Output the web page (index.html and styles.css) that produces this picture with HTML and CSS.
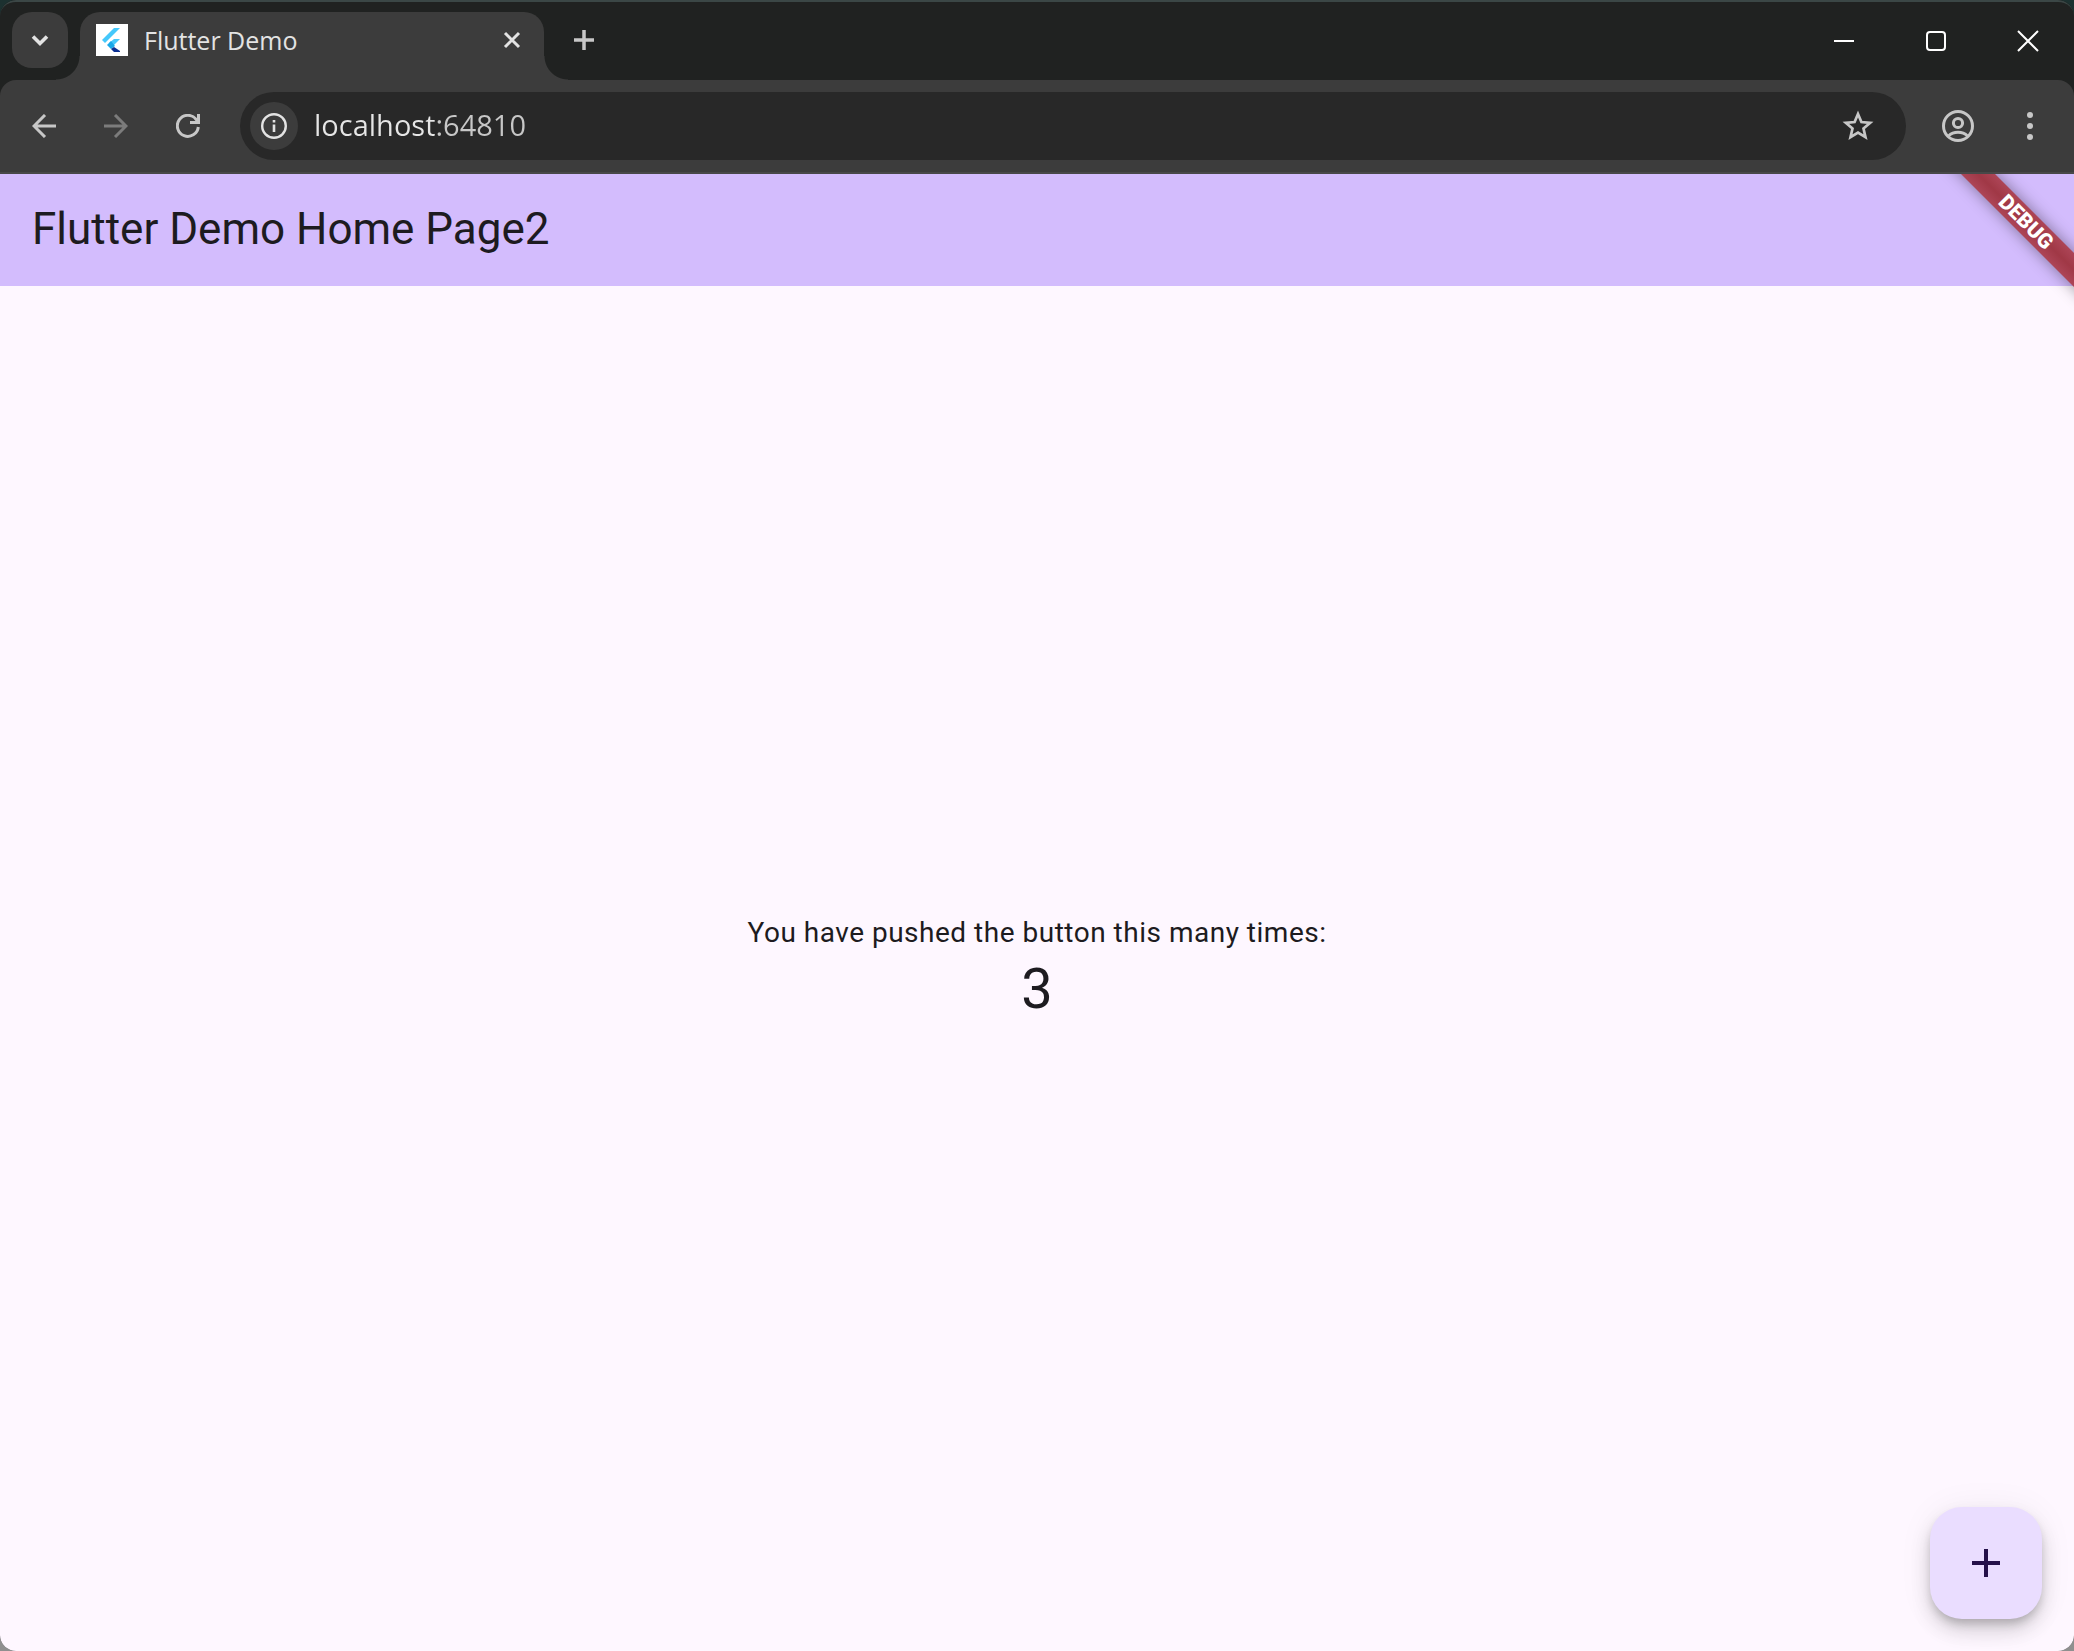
FILE: index.html
```html
<!DOCTYPE html>
<html lang="en">
<head>
<meta charset="utf-8">
<title>Flutter Demo</title>
<link rel="stylesheet" href="styles.css">
</head>
<body>
<div class="window">
  <header class="tabstrip">
    <button class="tab-search" aria-label="Search tabs"><svg width="24" height="24" viewBox="0 0 24 24"><path d="M5 8.500l7 7 7-7" fill="none" stroke="currentColor" stroke-width="3.600"/></svg></button>
    <div class="tab">
      <svg class="favicon" width="32" height="32" viewBox="0 0 32 32"><path fill="#fff" d="M0 0h32v32H0z"/><path fill="#45c8fb" d="M18 4h6L9 19l-3-3z"/><path fill="#45c8fb" d="M18 15h6l-7 7-4-3z"/><path fill="#19a8e8" d="M11 21l4-4 4 5-4 3z"/><path fill="#0b2f93" d="M15 25l3-2 6 4v1h-6z"/></svg>
      <span class="tab-title">Flutter Demo</span>
      <button class="tab-close" aria-label="Close tab"><svg width="24" height="24" viewBox="0 0 24 24"><path d="M5 5l14 14M19 5L5 19" fill="none" stroke="currentColor" stroke-width="3"/></svg></button>
    </div>
    <button class="new-tab" aria-label="New tab"><svg width="24" height="24" viewBox="0 0 24 24"><path d="M2 12h20M12 2v20" fill="none" stroke="currentColor" stroke-width="3.500"/></svg></button>
    <div class="window-controls">
      <button aria-label="Minimize"><svg width="24" height="24" viewBox="0 0 24 24"><path d="M2 12h20" stroke="currentColor" stroke-width="2"/></svg></button>
      <button aria-label="Maximize"><svg width="24" height="24" viewBox="0 0 24 24"><rect x="3" y="3" width="18" height="18" rx="3" fill="none" stroke="currentColor" stroke-width="2"/></svg></button>
      <button aria-label="Close"><svg width="24" height="24" viewBox="0 0 24 24"><path d="M2 2l20 20M22 2L2 22" stroke="currentColor" stroke-width="2"/></svg></button>
    </div>
  </header>

  <nav class="toolbar">
    <button class="tool" aria-label="Back"><svg width="24" height="24" viewBox="0 0 24 24"><path d="M24 12H2M13 1L2 12l11 11" fill="none" stroke="currentColor" stroke-width="3"/></svg></button>
    <button class="tool" aria-label="Forward" disabled><svg width="24" height="24" viewBox="0 0 24 24"><path d="M0 12h22M11 1l11 11-11 11" fill="none" stroke="currentColor" stroke-width="3"/></svg></button>
    <button class="tool" aria-label="Reload"><svg width="24" height="24" viewBox="0 0 24 24"><path d="M22.300 13A10.500 10.500 0 1 1 20 5.200l2 3" fill="none" stroke="currentColor" stroke-width="3"/><path d="M21 0h3v10H14V7h7z" fill="currentColor"/></svg></button>
    <div class="omnibox">
      <button class="site-info" aria-label="View site information"><svg width="26" height="26" viewBox="0 0 26 26"><circle cx="13" cy="13" r="11.800" fill="none" stroke="currentColor" stroke-width="2.400"/><path d="M11.700 11.500h2.600V19h-2.600zM11.700 7h2.600v2.600h-2.600z" fill="currentColor"/></svg></button>
      <input class="url" type="text" aria-label="Address" value="localhost:64810">
      <button class="bookmark" aria-label="Bookmark this tab"><svg width="32" height="32" viewBox="0 0 32 32"><path d="M16 4l3.400 8 8.800.8-6.700 5.800 2 8.600L16 22.600l-7.500 4.600 2-8.600-6.700-5.800 8.800-.8z" fill="none" stroke="currentColor" stroke-width="2.700"/></svg></button>
    </div>
    <button class="profile" aria-label="Profile"><svg width="32" height="32" viewBox="0 0 32 32" fill="none" stroke="currentColor" stroke-width="3"><circle cx="16" cy="16" r="14.500"/><circle cx="16" cy="13" r="4.600"/><path d="M6.500 26c5-5 14-5 19 0"/></svg></button>
    <button class="menu" aria-label="Menu"><svg width="32" height="32" viewBox="0 0 32 32" fill="currentColor"><circle cx="16" cy="5" r="3"/><circle cx="16" cy="16" r="3"/><circle cx="16" cy="27" r="3"/></svg></button>
  </nav>

  <div class="app">
    <header class="appbar"><h1>Flutter Demo Home Page2</h1></header>
    <main class="counter">
      <p class="message">You have pushed the button this many times:</p>
      <p class="count">3</p>
    </main>
    <button class="fab" aria-label="Increment"><svg width="48" height="48" viewBox="0 0 48 48"><path d="M10 24h28M24 10v28" stroke="currentColor" stroke-width="4"/></svg></button>
    <div class="debug"><span class="ribbon">DEBUG</span></div>
  </div>
</div>
</body>
</html>
```

FILE: styles.css
```css
* { box-sizing: border-box; }
body { margin: 0; background: linear-gradient(#1c3130 50%, #8f8f8f 50%); }
h1, p { margin: 0; font-weight: 400; }
button { display: grid; place-items: center; flex: none; padding: 0; border: 0; background: none; color: inherit; }
svg { display: block; }

.window {
  display: flex;
  flex-direction: column;
  min-height: 100vh;
  border-radius: 16px;
  overflow: hidden;
  background: #202221;
  font-family: "Segoe UI", "Open Sans", sans-serif;
}

/* Tab strip */
.tabstrip {
  display: flex;
  height: 80px;
  padding: 10px 0 0 12px;
  border-top: 2px solid #3b4746;
  border-radius: 16px 16px 0 0;
  color: #e3e3e3;
}
.tab-search { width: 56px; height: 56px; border-radius: 20px; background: #3c3c3c; }
.tab {
  position: relative;
  display: flex;
  align-items: center;
  gap: 16px;
  width: 464px;
  height: 68px;
  margin-left: 12px;
  padding: 0 20px 12px 16px;
  border-radius: 20px 20px 0 0;
  background: #3c3c3c;
}
.tab::before, .tab::after {
  content: "";
  position: absolute;
  bottom: 0;
  width: 24px;
  height: 24px;
}
.tab::before { right: 100%; background: radial-gradient(circle at 0 0, transparent 23px, #3c3c3c 24px); }
.tab::after { left: 100%; background: radial-gradient(circle at 100% 0, transparent 23px, #3c3c3c 24px); }
.tab-title { flex: 1; font-size: 25px; line-height: 32px; }
.new-tab { width: 56px; height: 56px; margin-left: 12px; color: #c7c7c7; }
.window-controls { display: flex; margin-left: auto; color: #fff; }
.window-controls button { width: 92px; height: 58px; }

/* Toolbar */
.toolbar {
  display: flex;
  align-items: center;
  height: 94px;
  padding: 0 8px;
  border-bottom: 2px solid #484848;
  border-radius: 16px 16px 0 0;
  background: #3c3c3c;
  color: #c7c7c7;
}
.tool { width: 72px; height: 68px; }
.tool:disabled { color: #7c7c7c; }
.omnibox {
  display: flex;
  flex: 1;
  align-items: center;
  height: 68px;
  margin-left: 16px;
  padding: 0 32px 0 10px;
  border-radius: 34px;
  background: #282828;
}
.site-info { width: 48px; height: 48px; border-radius: 50%; background: #3c3c3c; color: #e3e3e3; }
.url {
  flex: 1;
  min-width: 0;
  height: 48px;
  margin-left: 16px;
  padding: 0 0 4px;
  border: 0;
  outline: 0;
  background: linear-gradient(90deg, #e6e6e6 120px, #c7c7c7 120px);
  background-clip: text;
  color: transparent;
  font-family: inherit;
  font-size: 29px;
}
.profile { width: 72px; height: 68px; margin-left: 16px; }
.menu { width: 72px; height: 68px; }

/* Application */
.app {
  position: relative;
  display: flex;
  flex: 1;
  flex-direction: column;
  overflow: hidden;
  background: #fef7ff;
  color: #1d1b20;
  font-family: Roboto, sans-serif;
}
.appbar { display: flex; align-items: center; height: 112px; padding: 0 32px 2px; background: #d3bcfd; }
.appbar h1 { font-size: 44px; line-height: 56px; }
.counter {
  display: flex;
  flex: 1;
  flex-direction: column;
  align-items: center;
  justify-content: center;
  text-align: center;
}
.message { font-size: 28px; line-height: 40px; letter-spacing: 0.018em; }
.count { font-size: 56px; line-height: 72px; }
.fab {
  position: absolute;
  right: 32px;
  bottom: 32px;
  width: 112px;
  height: 112px;
  border-radius: 32px;
  background: #eaddff;
  color: #25104a;
  box-shadow: 0 6px 10px -2px rgba(0, 0, 0, .2), 0 12px 20px rgba(0, 0, 0, .14), 0 2px 36px rgba(0, 0, 0, .06);
}

/* Corner ribbon */
.debug {
  position: absolute;
  top: 0;
  right: 0;
  width: 160px;
  height: 160px;
  overflow: hidden;
  pointer-events: none;
}
.ribbon {
  position: absolute;
  top: 36px;
  right: -52px;
  width: 200px;
  background: linear-gradient(#ad4557, #a03846 50%, #ad4557);
  box-shadow: 0 0 16px rgba(0, 0, 0, .4);
  color: #fff;
  font-size: 21px;
  font-weight: 900;
  line-height: 24px;
  text-align: center;
  transform: rotate(45deg);
}
```
